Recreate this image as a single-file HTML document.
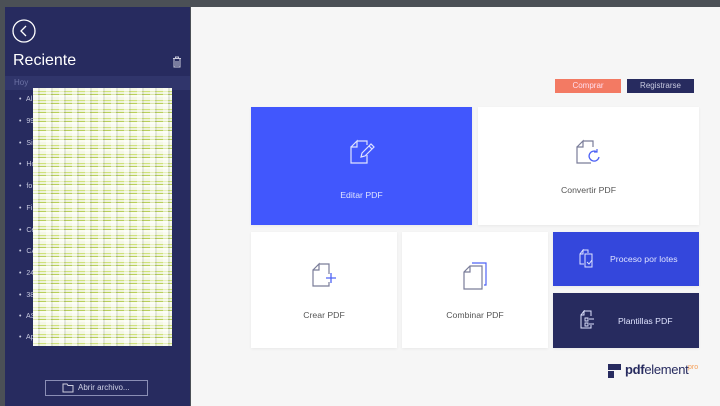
<!DOCTYPE html>
<html><head><meta charset="utf-8"><style>
*{margin:0;padding:0;box-sizing:border-box}
body{width:720px;height:406px;overflow:hidden;background:#4b5056;font-family:"Liberation Sans",sans-serif;position:relative}
.side{position:absolute;left:5px;top:7px;width:185px;height:399px;background:#272b5f}
.main{position:absolute;left:191px;top:7px;width:529px;height:399px;background:#f6f6f6}
.card{position:absolute;background:#fff;font-size:8.7px;color:#555;text-align:center;box-shadow:0 1px 3px rgba(0,0,0,.06)}
.card svg{position:absolute;left:50%;transform:translateX(-50%)}
.li{position:absolute;left:14px;color:#c8cae0;font-size:7px;word-spacing:3px}
.btn{position:absolute;top:79px;height:14px;font-size:8px;text-align:center;line-height:14px}
</style></head><body>
<div class="side">
<svg style="position:absolute;left:7px;top:12px" width="24" height="24"><circle cx="12" cy="12" r="11" fill="none" stroke="#fff" stroke-width="1.3"/><path d="M14 7l-5 5 5 5" fill="none" stroke="#fff" stroke-width="1.3"/></svg>
<div style="position:absolute;left:8px;top:45px;color:#fff;font-size:16px">Reciente</div>
<svg style="position:absolute;left:167px;top:49px" width="10" height="12"><path d="M1 2.5h8M3.5 2.5V1h3v1.5M2 3v8h6V3M4 5v5M6 5v5" fill="none" stroke="#ccd" stroke-width="1"/></svg>
<div style="position:absolute;left:0;top:69px;width:185px;height:14px;background:#30356b;color:#6d73a6;font-size:8px;padding-left:9px;line-height:14px">Hoy</div>
<div class="li" style="top:89px">• Al</div><div class="li" style="top:111px">• 99</div><div class="li" style="top:133px">• Si</div><div class="li" style="top:154px">• Ho</div><div class="li" style="top:176px">• fo</div><div class="li" style="top:198px">• Fi</div><div class="li" style="top:220px">• Ce</div><div class="li" style="top:241px">• CA</div><div class="li" style="top:263px">• 24</div><div class="li" style="top:285px">• 38</div><div class="li" style="top:306px">• AS</div><div class="li" style="top:327px">• Ap</div>
<div style="position:absolute;left:28px;top:81px;width:139px;height:258px;background:repeating-linear-gradient(90deg,rgba(255,255,255,.5) 0 5px,rgba(80,90,110,.12) 5px 7px,rgba(255,255,255,0) 7px 13px),repeating-linear-gradient(180deg,#f4f7e6 0 3px,#cfe27a 3px 4px,#eef3d8 4px 6px,#b8cf5a 6px 7px,#fafcf0 7px 9px)"></div>
<div style="position:absolute;left:40px;top:373px;width:103px;height:16px;border:1px solid #8a8eb5;color:#d0d2e6;font-size:8px;line-height:14px;padding-left:32px">Abrir archivo...</div>
<svg style="position:absolute;left:57px;top:376px" width="12" height="10"><path d="M1 1h4l1 1.5h5V9H1z" fill="none" stroke="#ccd" stroke-width="1"/></svg>
</div>
<div class="main"></div>
<div class="btn" style="left:555px;width:66px;background:#f37a63;color:#fde">Comprar</div>
<div class="btn" style="left:627px;width:67px;background:#272b5f;color:#c8cae0">Registrarse</div>

<div class="card" style="left:251px;top:107px;width:221px;height:118px;background:#4157fd;color:#dfe3ff">
<svg style="top:32px" width="26" height="26" viewBox="0 0 26 26"><path d="M8 2h10v4M2 8l6-6v6H2v16h16v-8" fill="none" stroke="#dfe3ff" stroke-width="1.2"/><path d="M12 18l1-4 9-9 3 3-9 9z M20 7l3 3" fill="none" stroke="#dfe3ff" stroke-width="1.2"/></svg>
<div style="position:absolute;top:83px;width:100%">Editar PDF</div></div>

<div class="card" style="left:478px;top:107px;width:221px;height:118px">
<svg style="top:32px" width="28" height="26" viewBox="0 0 28 26"><path d="M8 2h10v6M2 8l6-6v6H2v16h14" fill="none" stroke="#7a7d99" stroke-width="1.2"/><path d="M24 18a5 5 0 1 1-2-5" fill="none" stroke="#4f63f5" stroke-width="1.3"/><path d="M22 10v3h-3" fill="none" stroke="#4f63f5" stroke-width="1.2"/></svg>
<div style="position:absolute;top:78px;width:100%">Convertir PDF</div></div>

<div class="card" style="left:251px;top:232px;width:146px;height:116px">
<svg style="top:30px" width="26" height="26" viewBox="0 0 26 26"><path d="M8 2h10v10M2 8l6-6v6H2v16h16v-4" fill="none" stroke="#7a7d99" stroke-width="1.2"/><path d="M15 16h10M20 11v10" stroke="#4f63f5" stroke-width="1.3"/></svg>
<div style="position:absolute;top:78px;width:100%">Crear PDF</div></div>

<div class="card" style="left:402px;top:232px;width:146px;height:116px">
<svg style="top:28px" width="26" height="30" viewBox="0 0 26 30"><path d="M10 3h14v22h-2" fill="none" stroke="#4f63f5" stroke-width="1.2"/><path d="M8 6h12v23H2V12zM2 12h6V6" fill="none" stroke="#7a7d99" stroke-width="1.2"/></svg>
<div style="position:absolute;top:78px;width:100%">Combinar PDF</div></div>

<div class="card" style="left:553px;top:232px;width:146px;height:54px;background:#3447dc;color:#dfe3ff;text-align:left">
<svg style="left:26px;top:17px;transform:none" width="16" height="20" viewBox="0 0 16 20"><path d="M4 1h5v3M1 5l3-4v4H1v10h4M6 5h7v13H6z" fill="none" stroke="#dfe3ff" stroke-width="1"/><path d="M8 13l2 2 3-4" fill="none" stroke="#dfe3ff" stroke-width="1"/></svg>
<div style="position:absolute;left:57px;top:22px">Proceso por lotes</div></div>

<div class="card" style="left:553px;top:293px;width:146px;height:55px;background:#272b5f;color:#dfe3ff;text-align:left">
<svg style="left:27px;top:17px;transform:none" width="16" height="20" viewBox="0 0 16 20"><path d="M4 1h7v5M1 5l3-4v4H1v13h10v-3" fill="none" stroke="#dfe3ff" stroke-width="1"/><path d="M5 8h3v3H5zM5 13h3v3H5zM9 9h5M9 14h5" fill="none" stroke="#dfe3ff" stroke-width=".9"/></svg>
<div style="position:absolute;left:65px;top:23px">Plantillas PDF</div></div>

<div style="position:absolute;left:608px;top:364px;width:13px;height:14px">
<div style="position:absolute;left:0;top:0;width:13px;height:6px;background:#272b5f"></div>
<div style="position:absolute;left:0;top:7px;width:6px;height:7px;background:#272b5f"></div></div>
<div style="position:absolute;left:625px;top:362px;font-size:13px;color:#272b5f;letter-spacing:-.3px"><b>pdf</b>element</div>
<div style="position:absolute;left:688px;top:364px;font-size:7px;color:#f5a05a">pro</div>
</body></html>
